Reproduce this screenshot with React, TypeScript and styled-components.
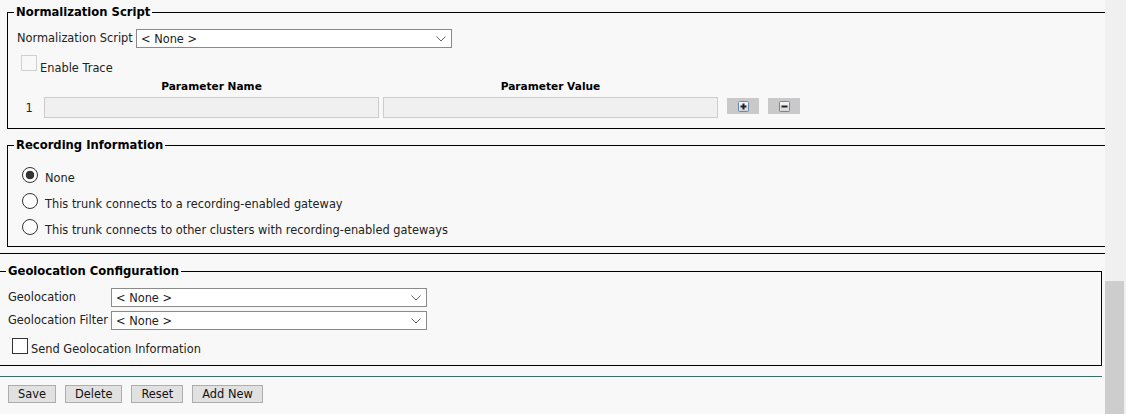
import React from "react";
import styled, { createGlobalStyle } from "styled-components";

const GlobalStyle = createGlobalStyle`
  html, body { margin: 0; padding: 0; background: #f8f8f8; overflow: hidden; }
  body {
    font-family: "DejaVu Sans", Verdana, sans-serif;
    font-size: 11.4px;
    color: #222;
  }
  * { box-sizing: border-box; }
`;

const Screen = styled.div`
  display: flex;
  width: 1126px;
  height: 414px;
`;

const Main = styled.div`
  flex: 0 0 1105px;
  overflow: hidden;
  display: flex;
  flex-direction: column;
`;

const Scrollbar = styled.div`
  flex: 0 0 21px;
  background: #f0f0f0;
  display: flex;
  flex-direction: column;
  justify-content: flex-end;
`;

const Thumb = styled.div`
  width: 19px;
  height: 133px;
  background: #cdcdcd;
`;

const Fieldset = styled.fieldset<{ $flush?: boolean; $mt: number; $pt: number; $pb: number }>`
  margin: ${(p) => p.$mt}px ${(p) => (p.$flush ? "3px" : "-20px")} 0 ${(p) => (p.$flush ? "-1px" : "7px")};
  border: 1px solid #000;
  padding: ${(p) => p.$pt}px 6px ${(p) => p.$pb}px;
  min-width: 0;
  display: flex;
  flex-direction: column;
`;

const Legend = styled.legend`
  font-weight: bold;
  font-size: 11.6px;
  line-height: 17px;
  height: 17px;
  padding: 0 2px;
  color: #000;
`;

const FormRow = styled.div<{ $gap?: number }>`
  display: flex;
  align-items: center;
  height: 19px;
  margin-top: ${(p) => p.$gap ?? 0}px;
`;

const Label = styled.label<{ $indent: number; $width: number }>`
  margin-left: ${(p) => p.$indent}px;
  width: ${(p) => p.$width}px;
  flex: 0 0 auto;
  white-space: nowrap;
  padding-bottom: 2px;
`;

const SelectWrap = styled.div`
  position: relative;
  width: 316px;
  height: 19px;
`;

const Select = styled.select`
  appearance: none;
  width: 100%;
  height: 100%;
  border: 1px solid #8a8a8a;
  background: #fff;
  font-family: inherit;
  font-size: 11.4px;
  color: #222;
  padding: 0 0 0 4px;
  border-radius: 0;
  outline: none;
`;

const Chevron = styled.svg`
  position: absolute;
  right: 6px;
  top: 7px;
  pointer-events: none;
`;

const CheckRow = styled.div<{ $indent: number; $gap: number }>`
  display: flex;
  align-items: flex-start;
  height: 16px;
  margin-top: ${(p) => p.$gap}px;
  margin-left: ${(p) => p.$indent}px;
`;

const Checkbox = styled.input.attrs({ type: "checkbox" })`
  appearance: none;
  margin: 0;
  width: 16px;
  height: 16px;
  background: #fff;
  border: 1px solid #333;
  flex: 0 0 auto;
  &:disabled {
    border-color: #cfcfcf;
    background: #f8f8f8;
  }
`;

const CheckText = styled.span<{ $drop: number }>`
  margin-left: 3px;
  margin-top: ${(p) => p.$drop}px;
  line-height: 14px;
  white-space: nowrap;
`;

const HeaderRow = styled.div`
  display: flex;
  align-items: center;
  height: 16px;
  margin-top: 7px;
  padding-left: 30px;
  gap: 4px;
`;

const HeaderCell = styled.div`
  width: 335px;
  text-align: center;
  font-weight: bold;
  font-size: 10.6px;
  color: #000;
`;

const InputRow = styled.div`
  display: flex;
  align-items: flex-start;
  margin-top: 3px;
`;

const IndexCell = styled.div`
  width: 30px;
  text-align: center;
  line-height: 21px;
  padding-top: 1px;
`;

const TextInput = styled.input<{ $gap?: number }>`
  width: 335px;
  height: 21px;
  margin: 0 0 0 ${(p) => p.$gap ?? 0}px;
  border: 1px solid #cccccc;
  background: #f0f0f0;
  padding: 0 3px;
  font-family: inherit;
  font-size: 11.4px;
  border-radius: 0;
`;

const IconButton = styled.button`
  width: 32px;
  height: 16px;
  margin: 1px 0 0 9px;
  padding: 0;
  border: none;
  background: #c9c9c9;
  display: flex;
  align-items: center;
  justify-content: center;
`;

const RadioRow = styled.label<{ $gap: number }>`
  display: flex;
  align-items: flex-start;
  height: 16px;
  margin-top: ${(p) => p.$gap}px;
  margin-left: 8px;
`;

const Radio = styled.input.attrs({ type: "radio" })`
  appearance: none;
  margin: 0;
  width: 16px;
  height: 16px;
  border-radius: 50%;
  border: 1px solid #333;
  background: #fff;
  flex: 0 0 auto;
  &:checked {
    background: radial-gradient(circle, #333 0 4px, #fff 4.6px);
  }
`;

const RadioText = styled.span`
  margin-left: 7px;
  margin-top: 4px;
  line-height: 14px;
  white-space: nowrap;
`;

const Rule = styled.div<{ $color: string; $mt: number; $right: number }>`
  height: 1px;
  flex: 0 0 1px;
  background: ${(p) => p.$color};
  margin: ${(p) => p.$mt}px ${(p) => p.$right}px 0 0;
`;

const ButtonBar = styled.div`
  display: flex;
  gap: 9px;
  margin: 8px 0 0 8px;
`;

const Button = styled.button`
  height: 18px;
  padding: 0 9px;
  border: 1px solid #adadad;
  background: #e1e1e1;
  font-family: inherit;
  font-size: 11.4px;
  color: #111;
  border-radius: 0;
  line-height: 16px;
`;

const SmallIcon = ({ plus }: { plus?: boolean }) => (
  <svg width="11" height="11" viewBox="0 0 11 11">
    <defs>
      <linearGradient id={plus ? "gp" : "gm"} x1="0" y1="0" x2="0" y2="1">
        <stop offset="0" stopColor="#fafafa" />
        <stop offset="1" stopColor="#cfd3d8" />
      </linearGradient>
    </defs>
    <rect x="0.5" y="0.5" width="10" height="10" rx="1" fill={`url(#${plus ? "gp" : "gm"})`} stroke="#6a86a8" />
    <rect x="2.5" y="4.5" width="6" height="2" fill="#222" />
    {plus && <rect x="4.5" y="2.5" width="2" height="6" fill="#222" />}
  </svg>
);

const DropSelect = () => (
  <SelectWrap>
    <Select defaultValue="none">
      <option value="none">&lt; None &gt;</option>
    </Select>
    <Chevron width="10" height="6" viewBox="0 0 10 6">
      <path d="M0.5 0.5 L5 5 L9.5 0.5" fill="none" stroke="#666" strokeWidth="1" />
    </Chevron>
  </SelectWrap>
);

export default function App() {
  return (
    <>
      <GlobalStyle />
      <Screen>
        <Main>
          <Fieldset $mt={4} $pt={8} $pb={9}>
            <Legend>Normalization Script</Legend>
            <FormRow>
              <Label $indent={3} $width={119}>Normalization Script</Label>
              <DropSelect />
            </FormRow>
            <CheckRow $indent={7} $gap={7}>
              <Checkbox disabled />
              <CheckText $drop={6}>Enable Trace</CheckText>
            </CheckRow>
            <HeaderRow>
              <HeaderCell>Parameter Name</HeaderCell>
              <HeaderCell>Parameter Value</HeaderCell>
            </HeaderRow>
            <InputRow>
              <IndexCell>1</IndexCell>
              <TextInput disabled />
              <TextInput disabled $gap={4} />
              <IconButton type="button"><SmallIcon plus /></IconButton>
              <IconButton type="button"><SmallIcon /></IconButton>
            </InputRow>
          </Fieldset>

          <Fieldset $mt={8} $pt={13} $pb={11}>
            <Legend>Recording Information</Legend>
            <RadioRow $gap={0}>
              <Radio name="rec" defaultChecked />
              <RadioText>None</RadioText>
            </RadioRow>
            <RadioRow $gap={10}>
              <Radio name="rec" />
              <RadioText>This trunk connects to a recording-enabled gateway</RadioText>
            </RadioRow>
            <RadioRow $gap={10}>
              <Radio name="rec" />
              <RadioText>This trunk connects to other clusters with recording-enabled gateways</RadioText>
            </RadioRow>
          </Fieldset>

          <Rule $color="#000" $mt={6} $right={0} />

          <Fieldset $flush $mt={9} $pt={8} $pb={11}>
            <Legend>Geolocation Configuration</Legend>
            <FormRow>
              <Label $indent={2} $width={103}>Geolocation</Label>
              <DropSelect />
            </FormRow>
            <FormRow $gap={4}>
              <Label $indent={2} $width={103}>Geolocation Filter</Label>
              <DropSelect />
            </FormRow>
            <CheckRow $indent={6} $gap={8}>
              <Checkbox />
              <CheckText $drop={4}>Send Geolocation Information</CheckText>
            </CheckRow>
          </Fieldset>

          <Rule $color="#3d6e6e" $mt={10} $right={3} />

          <ButtonBar>
            <Button type="button">Save</Button>
            <Button type="button">Delete</Button>
            <Button type="button">Reset</Button>
            <Button type="button">Add New</Button>
          </ButtonBar>
        </Main>
        <Scrollbar>
          <Thumb />
        </Scrollbar>
      </Screen>
    </>
  );
}
